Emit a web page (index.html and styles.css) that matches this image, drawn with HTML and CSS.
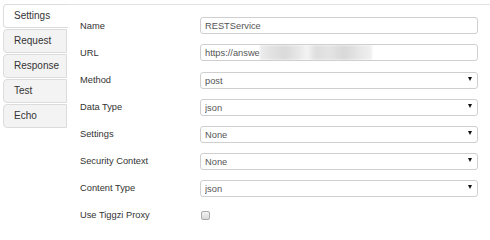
FILE: index.html
```html
<!DOCTYPE html>
<html lang="en">
<head>
  <meta charset="UTF-8" />
  <title>REST Service</title>
  <link rel="stylesheet" href="styles.css">
</head>
<body>

<div class="editor">
  <!-- tabs a sinistra -->
  <ul class="tabs">
    <li class="tab active">Settings</li>
    <li class="tab">Request</li>
    <li class="tab">Response</li>
    <li class="tab">Test</li>
    <li class="tab">Echo</li>
  </ul>

  <div class="panel">
    <div class="form">
      <label>Name</label>
      <input class="field" type="text" value="RESTService">

      <label>URL</label>
      <div class="field url">https://answe<span class="blur"></span></div>

      <label>Method</label>
      <div class="select-wrap"><select class="field"><option>post</option></select></div>

      <label>Data Type</label>
      <div class="select-wrap"><select class="field"><option>json</option></select></div>

      <label>Settings</label>
      <div class="select-wrap"><select class="field"><option>None</option></select></div>

      <label>Security Context</label>
      <div class="select-wrap"><select class="field"><option>None</option></select></div>

      <label>Content Type</label>
      <div class="select-wrap"><select class="field"><option>json</option></select></div>

      <label>Use Tiggzi Proxy</label>
      <div><input class="check" type="checkbox"></div>
    </div>
  </div>
</div>

</body>
</html>
```

FILE: styles.css
```css
body {
  margin: 0;
  background: #fff;
  font-family: "Liberation Sans", Arial, sans-serif;
  color: #333;
}
.editor {
  display: flex;
  align-items: flex-start;
  padding: 4px 0 0 3px;
}

/* TABS */
.tabs {
  list-style: none;
  margin: 0;
  padding: 0;
  width: 64px;
  flex-shrink: 0;
}
.tab {
  box-sizing: border-box;
  height: 24px;
  line-height: 22px;
  margin-bottom: 1px;
  padding-left: 10px;
  font-size: 10px;
  color: #333;
  background: #f3f3f3;
  border: 1px solid #dcdcdc;
  border-radius: 4px 0 0 4px;
}
.tab.active {
  background: #fff;
  border-right: none;
  margin-right: -1px;
}

/* PANNELLO */
.panel {
  flex: 1;
  border-top: 1px solid #e2e2e2;
  padding: 12px 12px 0 13px;
}
.form {
  display: grid;
  grid-template-columns: 120px 278px;
  grid-auto-rows: 17px;
  row-gap: 10px;
  align-items: center;
}
.form label {
  font-size: 9.3px;
  color: #333;
}
.field {
  box-sizing: border-box;
  width: 100%;
  height: 17px;
  margin: 0;
  padding: 0 4px;
  font-family: "Liberation Sans", Arial, sans-serif;
  font-size: 9.3px;
  color: #555;
  background: #fff;
  border: 1px solid #cfcfcf;
  border-radius: 3px;
  outline: none;
}
.url {
  display: flex;
  align-items: center;
  white-space: nowrap;
  overflow: hidden;
}
.blur {
  display: inline-block;
  width: 112px;
  height: 15px;
  background: linear-gradient(90deg, #ececec 0, #e2e2e2 10%, #dadada 22%, #e8e8e8 35%, #f4f4f4 42%, #dedede 50%, #e4e4e4 62%, #d8d8d8 75%, #e6e6e6 88%, #f0f0f0 100%);
  filter: blur(1px);
}
.select-wrap {
  position: relative;
}
.select-wrap select {
  -webkit-appearance: none;
  appearance: none;
}
.select-wrap::after {
  content: "";
  position: absolute;
  right: 6px;
  top: 7px;
  border-left: 2.5px solid transparent;
  border-right: 2.5px solid transparent;
  border-top: 4px solid #111;
}
.check {
  -webkit-appearance: none;
  appearance: none;
  display: block;
  width: 9px;
  height: 9px;
  margin: 1px 0 0 1px;
  border: 1px solid #aaa;
  border-radius: 2px;
  background: linear-gradient(#f2f2f2, #d9d9d9);
}
```
